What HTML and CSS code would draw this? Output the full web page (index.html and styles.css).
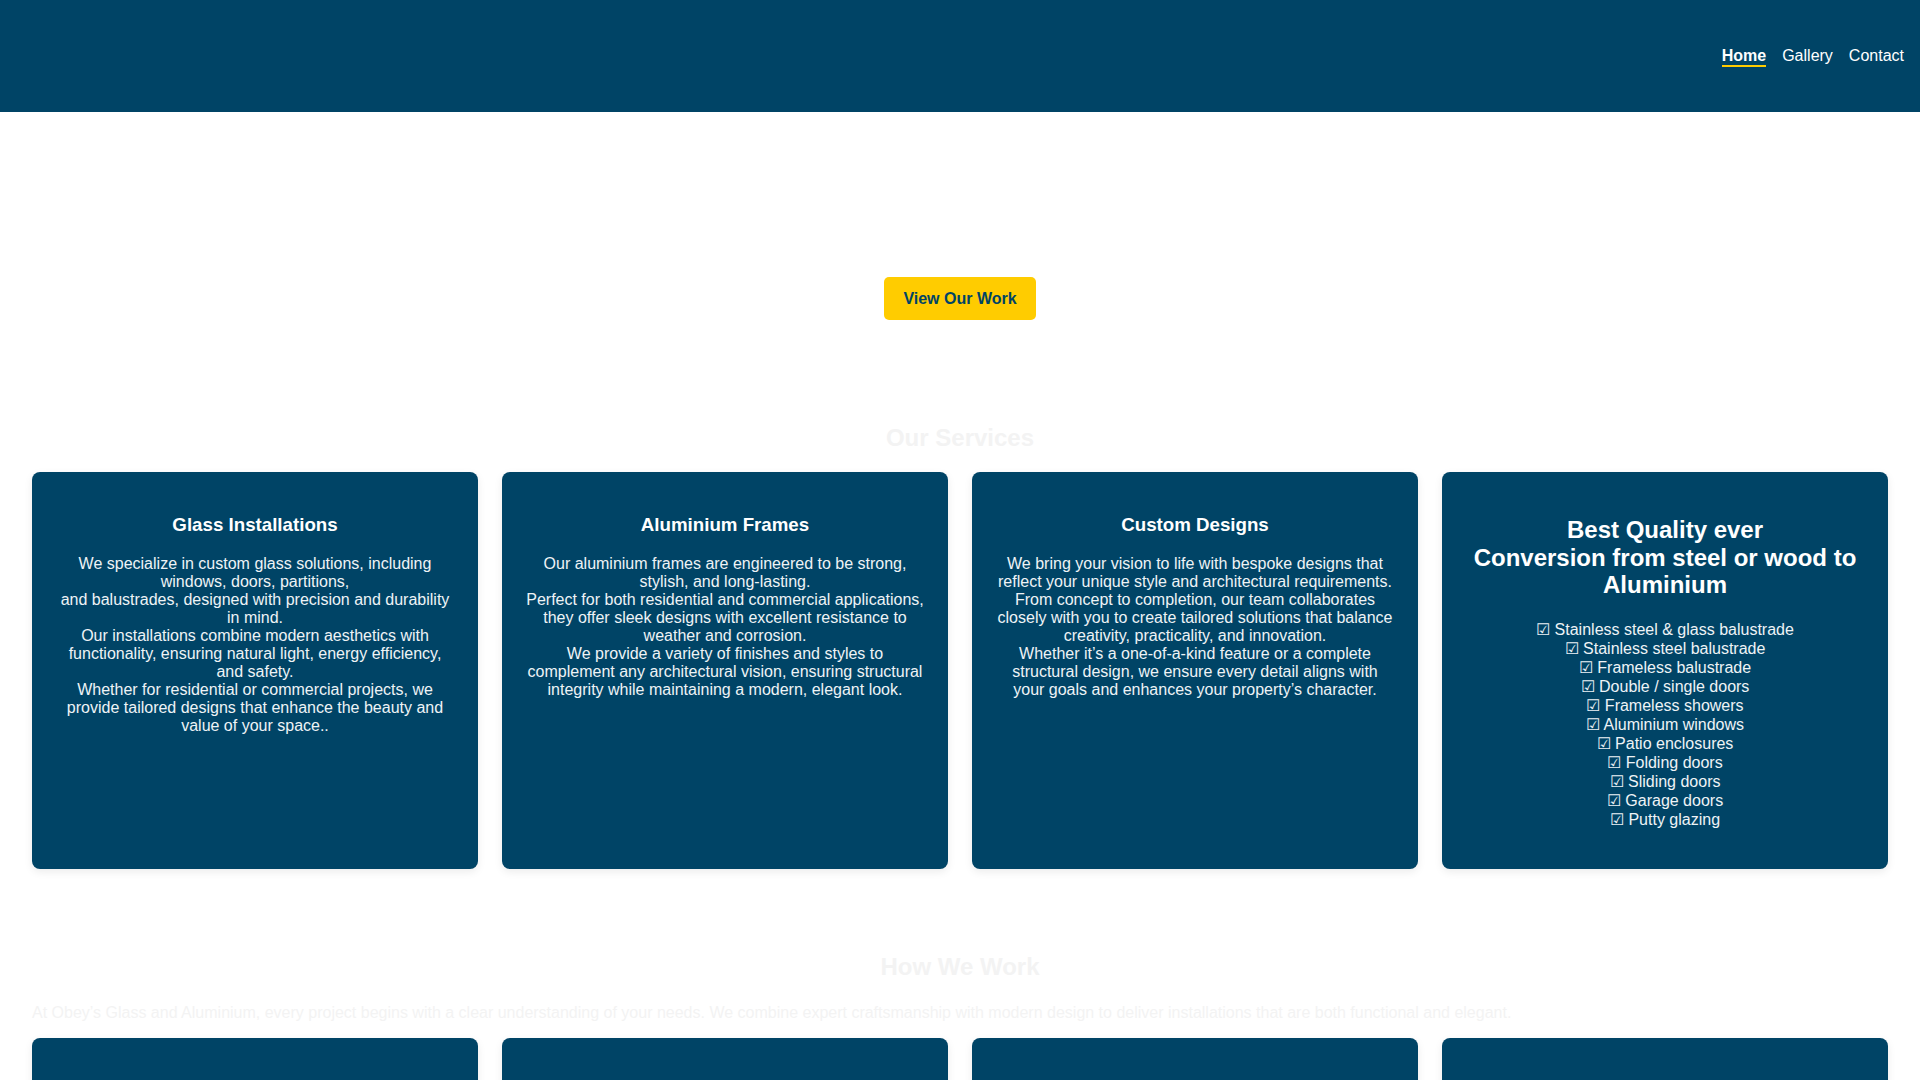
FILE: index.html
```html
<!DOCTYPE html>
<html lang="en">
<head>
<meta charset="utf-8">
<title>Obey's Glass and Aluminium</title>
<link rel="stylesheet" href="styles.css">
</head>
<body>
<header class="site-header">
  <div class="logo"></div>
  <nav class="nav">
    <a href="#" class="nav-link active">Home</a>
    <a href="#" class="nav-link">Gallery</a>
    <a href="#" class="nav-link">Contact</a>
  </nav>
</header>

<section class="hero">
  <a href="#" class="btn">View Our Work</a>
</section>

<section class="services">
  <h2 class="section-title">Our Services</h2>
  <div class="card-grid">
    <div class="card">
      <h3>Glass Installations</h3>
      <p>We specialize in custom glass solutions, including windows, doors, partitions,<br>and balustrades, designed with precision and durability in mind.<br>Our installations combine modern aesthetics with functionality, ensuring natural light, energy efficiency, and safety.<br>Whether for residential or commercial projects, we provide tailored designs that enhance the beauty and value of your space..</p>
    </div>
    <div class="card">
      <h3>Aluminium Frames</h3>
      <p>Our aluminium frames are engineered to be strong, stylish, and long-lasting.<br>Perfect for both residential and commercial applications, they offer sleek designs with excellent resistance to weather and corrosion.<br>We provide a variety of finishes and styles to complement any architectural vision, ensuring structural integrity while maintaining a modern, elegant look.</p>
    </div>
    <div class="card">
      <h3>Custom Designs</h3>
      <p>We bring your vision to life with bespoke designs that reflect your unique style and architectural requirements.<br>From concept to completion, our team collaborates closely with you to create tailored solutions that balance creativity, practicality, and innovation.<br>Whether it’s a one-of-a-kind feature or a complete structural design, we ensure every detail aligns with your goals and enhances your property’s character.</p>
    </div>
    <div class="card">
      <h2>Best Quality ever<br>Conversion from steel or wood to Aluminium</h2>
      <ul class="checklist">
        <li>☑ Stainless steel &amp; glass balustrade</li>
        <li>☑ Stainless steel balustrade</li>
        <li>☑ Frameless balustrade</li>
        <li>☑ Double / single doors</li>
        <li>☑ Frameless showers</li>
        <li>☑ Aluminium windows</li>
        <li>☑ Patio enclosures</li>
        <li>☑ Folding doors</li>
        <li>☑ Sliding doors</li>
        <li>☑ Garage doors</li>
        <li>☑ Putty glazing</li>
      </ul>
    </div>
  </div>
</section>

<section class="how">
  <h2 class="section-title how-title">How We Work</h2>
  <p class="how-text">At Obey’s Glass and Aluminium, every project begins with a clear understanding of your needs. We combine expert craftsmanship with modern design to deliver installations that are both functional and elegant.</p>
  <div class="card-grid">
    <div class="card step"></div>
    <div class="card step"></div>
    <div class="card step"></div>
    <div class="card step"></div>
  </div>
</section>
</body>
</html>
```

FILE: styles.css
```css
html, body {
  margin: 0;
  padding: 0;
}

body {
  font-family: "Liberation Sans", Arial, sans-serif;
  font-size: 16px;
  background: #ffffff;
  color: #333333;
}

.site-header {
  background: #004466;
  height: 112px;
  display: flex;
  justify-content: space-between;
  align-items: center;
  padding: 2px 16px 0 32px;
  box-sizing: border-box;
}

.nav {
  display: flex;
  gap: 16px;
  align-items: center;
}

.nav-link {
  color: #ffffff;
  text-decoration: none;
  font-size: 16px;
  padding-bottom: 0;
  border-bottom: 2px solid transparent;
}

.nav-link.active {
  font-weight: bold;
  border-bottom-color: #ffcc00;
}

.hero {
  padding: 165px 0 0;
  height: 312px;
  box-sizing: border-box;
  text-align: center;
}

.btn {
  display: inline-block;
  background: #ffcc00;
  color: #004466;
  font-weight: bold;
  font-size: 16px;
  text-decoration: none;
  padding: 12px 19px;
  line-height: 19px;
  border-radius: 5px;
}

.services {
  padding: 0 32px;
}

.section-title {
  text-align: center;
  color: #f3f3f3;
  font-size: 24px;
  line-height: 28px;
  margin: 0 0 20px;
}

.card-grid {
  display: grid;
  grid-template-columns: repeat(4, 1fr);
  gap: 24px;
}

.card {
  background: #004466;
  color: #eef3f6;
  border-radius: 8px;
  padding: 24px;
  text-align: center;
  box-shadow: 0 3px 8px rgba(0, 0, 0, 0.08);
}

.card h3 {
  color: #ffffff;
  font-size: 18.72px;
  line-height: 21.5px;
  margin: 17.5px 0 19.7px;
}

.card p {
  margin: 19.7px 0 16px;
  line-height: 18px;
}

.card h2 {
  color: #ffffff;
  font-size: 24px;
  line-height: 27.6px;
  margin: 19.92px 0 21px;
}

.checklist {
  list-style: none;
  padding: 0;
  margin: 21px 0 16px;
}

.checklist li {
  line-height: 19px;
}

.how {
  padding: 84px 32px 0;
}

.how-title {
  margin-bottom: 23px;
}

.how-text {
  color: #f3f3f3;
  margin: 0 0 16px;
  line-height: 18px;
}

.card.step {
  height: 300px;
  padding: 0;
}
```
